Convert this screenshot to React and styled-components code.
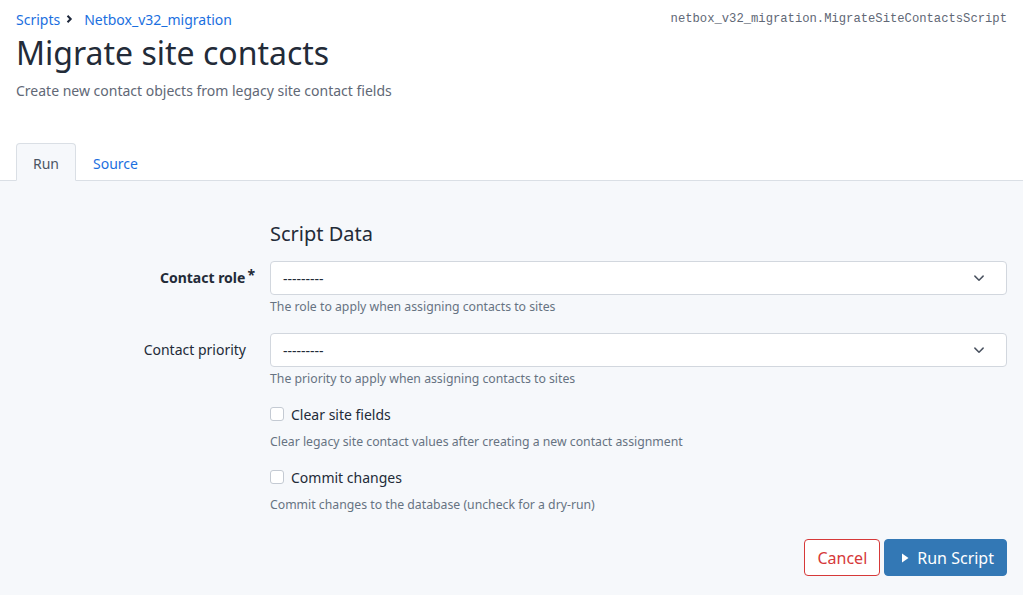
import React from 'react'
import styled, { createGlobalStyle } from 'styled-components'

const GlobalStyle = createGlobalStyle`
  html, body {
    margin: 0;
    padding: 0;
    background: #ffffff;
    font-family: "Noto Sans", "Liberation Sans", sans-serif;
    color: #1d273b;
  }
`

const Page = styled.div`
  width: 1023px;
  height: 595px;
  display: flex;
  flex-direction: column;
  overflow: hidden;
`

const Header = styled.div`
  padding: 8px 16px 0 16px;
`

const TopRow = styled.div`
  display: flex;
  align-items: center;
  justify-content: space-between;
  height: 22px;
`

const Breadcrumbs = styled.div`
  display: flex;
  align-items: center;
  font-size: 14px;
`

const Crumb = styled.a`
  color: #1b6fe0;
  text-decoration: none;
`

const SepIcon = styled.svg`
  margin: 0 11px 0 6px;
`

const ScriptPath = styled.code`
  font-family: "Liberation Mono", "DejaVu Sans Mono", monospace;
  font-size: 12.2px;
  color: #616876;
`

const Title = styled.h1`
  margin: 3px 0 0 0;
  font-size: 32px;
  font-weight: 400;
  line-height: 40px;
  color: #232b38;
`

const Subtitle = styled.div`
  margin-top: 8px;
  font-size: 14px;
  color: #616876;
`

const Tabs = styled.div`
  display: flex;
  align-items: flex-end;
  margin-top: 42px;
  padding: 0 16px;
  border-bottom: 1px solid #dadfe5;
  height: 38px;
`

const Tab = styled.div`
  height: 38px;
  box-sizing: border-box;
  padding: 3px 16px 0 16px;
  display: flex;
  align-items: center;
  font-size: 14px;
  margin-bottom: -1px;
  color: ${p => (p.active ? '#4b5563' : '#1b6fe0')};
  background: ${p => (p.active ? '#f6f8fb' : 'transparent')};
  border: 1px solid ${p => (p.active ? '#dadfe5' : 'transparent')};
  border-bottom-color: ${p => (p.active ? '#f6f8fb' : 'transparent')};
  border-radius: 4px 4px 0 0;
`

const Body = styled.div`
  flex: 1;
  background: #f6f8fb;
  padding: 40px 16px 0 16px;
`

const Section = styled.div`
  display: grid;
  grid-template-columns: 254px 1fr;
`

const SectionTitle = styled.div`
  grid-column: 2;
  font-size: 20px;
  color: #232b38;
  line-height: 26px;
  margin-bottom: 14px;
`

const Label = styled.div`
  grid-column: 1;
  text-align: right;
  padding-right: 24px;
  font-size: 14px;
  font-weight: ${p => (p.required ? 700 : 400)};
  color: #232b38;
  height: 34px;
  line-height: 34px;
`

const Asterisk = styled.span`
  color: #232b38;
  font-weight: 700;
  margin-right: -9px;
  margin-left: 2px;
  position: relative;
  top: -3px;
`

const Field = styled.div`
  grid-column: 2;
  margin-bottom: ${p => p.gap || 0}px;
`

const SelectBox = styled.div`
  height: 34px;
  box-sizing: border-box;
  background: #ffffff;
  border: 1px solid #d2d7de;
  border-radius: 4px;
  display: flex;
  align-items: center;
  justify-content: space-between;
  padding: 0 21px 0 12px;
  font-size: 14px;
  color: #232b38;
`

const Help = styled.div`
  font-size: 12.25px;
  color: #667382;
  margin-top: ${p => p.top || 4}px;
  line-height: 16px;
`

const CheckRow = styled.label`
  display: flex;
  align-items: center;
  gap: 7px;
  font-size: 14px;
  color: #232b38;
  height: 20px;
`

const Box = styled.span`
  width: 14px;
  height: 14px;
  box-sizing: border-box;
  border: 1px solid #c4cad3;
  border-radius: 3px;
  background: #ffffff;
`

const Actions = styled.div`
  display: flex;
  justify-content: flex-end;
  gap: 4px;
  margin-top: 26px;
`

const Button = styled.button`
  height: 37px;
  box-sizing: border-box;
  padding: 0 12px;
  font-family: inherit;
  font-size: 16px;
  border-radius: 4px;
  display: flex;
  align-items: center;
  gap: 8px;
  cursor: pointer;
  border: 1px solid ${p => (p.variant === 'danger' ? '#d63939' : '#3378b5')};
  background: ${p => (p.variant === 'danger' ? '#ffffff' : '#3378b5')};
  color: ${p => (p.variant === 'danger' ? '#d63939' : '#ffffff')};
  padding-left: ${p => (p.variant === 'danger' ? 12 : 16)}px;
`

const Chevron = () => (
  <svg width="12" height="12" viewBox="0 0 16 16" fill="none">
    <path d="M2.5 5.5 L8 11 L13.5 5.5" stroke="#4a5260" strokeWidth="2" strokeLinecap="round" strokeLinejoin="round" />
  </svg>
)

const Caret = () => (
  <svg width="8" height="10" viewBox="0 0 8 10">
    <path d="M1 0.5 L7.5 5 L1 9.5 Z" fill="#ffffff" />
  </svg>
)

const Sep = () => (
  <SepIcon width="7" height="10" viewBox="0 0 7 10">
    <path d="M1.5 1.8 L4.7 5 L1.5 8.2" stroke="#1d273b" strokeWidth="2" fill="none" />
  </SepIcon>
)

const App = () => {
  return (
    <Page>
      <GlobalStyle />
      <Header>
        <TopRow>
          <Breadcrumbs>
            <Crumb href="#">Scripts</Crumb>
            <Sep />
            <Crumb href="#">Netbox_v32_migration</Crumb>
          </Breadcrumbs>
          <ScriptPath>netbox_v32_migration.MigrateSiteContactsScript</ScriptPath>
        </TopRow>
        <Title>Migrate site contacts</Title>
        <Subtitle>Create new contact objects from legacy site contact fields</Subtitle>
      </Header>
      <Tabs>
        <Tab active>Run</Tab>
        <Tab>Source</Tab>
      </Tabs>
      <Body>
        <Section>
          <SectionTitle>Script Data</SectionTitle>

          <Label required>
            Contact role<Asterisk>*</Asterisk>
          </Label>
          <Field gap={18}>
            <SelectBox>
              <span>---------</span>
              <Chevron />
            </SelectBox>
            <Help>The role to apply when assigning contacts to sites</Help>
          </Field>

          <Label>Contact priority</Label>
          <Field gap={17}>
            <SelectBox>
              <span>---------</span>
              <Chevron />
            </SelectBox>
            <Help>The priority to apply when assigning contacts to sites</Help>
          </Field>

          <Field gap={17}>
            <CheckRow>
              <Box />
              Clear site fields
            </CheckRow>
            <Help top={10}>Clear legacy site contact values after creating a new contact assignment</Help>
          </Field>

          <Field>
            <CheckRow>
              <Box />
              Commit changes
            </CheckRow>
            <Help top={10}>Commit changes to the database (uncheck for a dry-run)</Help>
          </Field>
        </Section>
        <Actions>
          <Button variant="danger">Cancel</Button>
          <Button>
            <Caret />
            Run Script
          </Button>
        </Actions>
      </Body>
    </Page>
  )
}

export default App
